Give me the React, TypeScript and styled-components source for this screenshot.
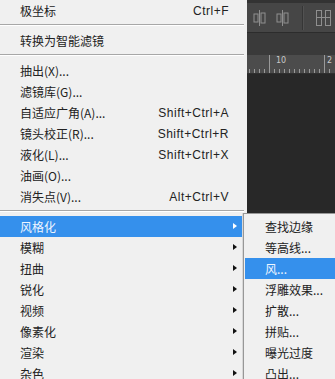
import React from "react";
import { createGlobalStyle, styled } from "styled-components";

type Entry =
  | { kind: "sep" }
  | { kind: "item"; label: string; shortcut?: string; sub?: boolean; active?: boolean };

const mainItems: Entry[] = [
  { kind: "item", label: "极坐标", shortcut: "Ctrl+F" },
  { kind: "sep" },
  { kind: "item", label: "转换为智能滤镜" },
  { kind: "sep" },
  { kind: "item", label: "抽出(X)..." },
  { kind: "item", label: "滤镜库(G)..." },
  { kind: "item", label: "自适应广角(A)...", shortcut: "Shift+Ctrl+A" },
  { kind: "item", label: "镜头校正(R)...", shortcut: "Shift+Ctrl+R" },
  { kind: "item", label: "液化(L)...", shortcut: "Shift+Ctrl+X" },
  { kind: "item", label: "油画(O)..." },
  { kind: "item", label: "消失点(V)...", shortcut: "Alt+Ctrl+V" },
  { kind: "sep" },
  { kind: "item", label: "风格化", sub: true, active: true },
  { kind: "item", label: "模糊", sub: true },
  { kind: "item", label: "扭曲", sub: true },
  { kind: "item", label: "锐化", sub: true },
  { kind: "item", label: "视频", sub: true },
  { kind: "item", label: "像素化", sub: true },
  { kind: "item", label: "渲染", sub: true },
  { kind: "item", label: "杂色", sub: true },
];

const stylizeItems = [
  { label: "查找边缘" },
  { label: "等高线..." },
  { label: "风...", active: true },
  { label: "浮雕效果..." },
  { label: "扩散..." },
  { label: "拼贴..." },
  { label: "曝光过度" },
  { label: "凸出..." },
];

const GlobalStyle = createGlobalStyle`
  html, body {
    margin: 0;
    padding: 0;
    background: #282828;
  }
  * {
    box-sizing: border-box;
  }
`;

export default function App() {
  return (
    <>
      <GlobalStyle />
      <Screen>
        <Menu>
          {mainItems.map((entry, i) =>
            entry.kind === "sep" ? (
              <Separator key={i} />
            ) : (
              <MenuItem key={i} $active={entry.active}>
                <Label>{entry.label}</Label>
                {entry.shortcut && <Shortcut>{entry.shortcut}</Shortcut>}
                {entry.sub && <Arrow $active={entry.active} />}
              </MenuItem>
            )
          )}
        </Menu>
        <Workspace>
          <OptionsBar>
            <AlignIcon />
            <AlignIcon />
            <BarDivider />
            <DistributeIcon />
          </OptionsBar>
          <TabStrip />
          <Ruler>
            <RulerTicks />
            <RulerNumber style={{ left: 29 }}>10</RulerNumber>
            <RulerNumber style={{ left: 80 }}>2</RulerNumber>
          </Ruler>
          <Canvas />
        </Workspace>
        <SubMenu>
          {stylizeItems.map((item, i) => (
            <SubItem key={i} $active={item.active}>
              {item.label}
            </SubItem>
          ))}
        </SubMenu>
      </Screen>
    </>
  );
}

const AlignIcon = () => (
  <svg width="13" height="16" viewBox="0 0 13 16">
    <rect x="6" y="0" width="1" height="16" fill="#8f8f8f" />
    <rect x="1" y="4" width="4" height="8" fill="none" stroke="#8f8f8f" />
    <rect x="8" y="3" width="4" height="10" fill="none" stroke="#8f8f8f" />
  </svg>
);

const DistributeIcon = () => (
  <svg width="17" height="18" viewBox="0 0 17 18">
    <rect x="1.5" y="1.5" width="5" height="15" fill="none" stroke="#8f8f8f" />
    <rect x="10.5" y="1.5" width="5" height="15" fill="none" stroke="#8f8f8f" />
    <rect x="1" y="8" width="15" height="1" fill="#8f8f8f" />
  </svg>
);

const RulerTicks = () => (
  <TickSvg width="87" height="18" viewBox="0 0 87 18">
    {Array.from({ length: 18 }).map((_, i) => {
      const x = 2 + i * 5;
      const major = x === 22 || x === 77;
      return (
        <rect
          key={i}
          x={x}
          y={major ? 0 : 14}
          width="1"
          height={major ? 18 : 4}
          fill="#9a9a9a"
        />
      );
    })}
  </TickSvg>
);

const Screen = styled.div`
  position: relative;
  display: flex;
  width: 335px;
  height: 379px;
  overflow: hidden;
  font-family: "Noto Sans CJK SC", "Liberation Sans", sans-serif;
  font-size: 12px;
`;

const Menu = styled.div`
  flex: 0 0 247px;
  display: flex;
  flex-direction: column;
  padding-right: 3px;
  background: #f0f0f0;
  color: #222222;
`;

const MenuItem = styled.div<{ $active?: boolean }>`
  position: relative;
  flex: 0 0 21px;
  display: flex;
  align-items: center;
  padding: 0 16px 0 20px;
  background: ${(p) => (p.$active ? "#3590ec" : "transparent")};
  color: ${(p) => (p.$active ? "#eef5ff" : "#222222")};
`;

const Label = styled.span`
  flex: 1;
  white-space: nowrap;
  line-height: 21px;
`;

const Shortcut = styled.span`
  font-family: "Liberation Sans", sans-serif;
  font-size: 12px;
  letter-spacing: 0.5px;
  white-space: nowrap;
  color: #222222;
  margin-right: -1px;
`;

const Arrow = styled.span<{ $active?: boolean }>`
  position: absolute;
  right: 7px;
  top: 7px;
  width: 0;
  height: 0;
  border-top: 3.5px solid transparent;
  border-bottom: 3.5px solid transparent;
  border-left: 4px solid ${(p) => (p.$active ? "#ffffff" : "#111111")};
`;

const Separator = styled.div`
  flex: 0 0 9px;
  display: flex;
  flex-direction: column;
  padding-top: 3px;

  &::before {
    content: "";
    height: 1px;
    background: #a7a7a7;
  }

  &::after {
    content: "";
    height: 1px;
    background: #ffffff;
  }
`;

const Workspace = styled.div`
  flex: 1;
  display: flex;
  flex-direction: column;
  background: #282828;
`;

const OptionsBar = styled.div`
  flex: 0 0 33px;
  display: flex;
  align-items: center;
  gap: 10px;
  padding: 0 0 0 6px;
  background: #464646;
  border-top: 3px solid #333333;
  border-bottom: 1px solid #2c2c2c;
`;

const BarDivider = styled.div`
  width: 1px;
  height: 24px;
  margin: 0 2px 0 3px;
  background: #363636;
  box-shadow: 1px 0 0 #525252;
`;

const TabStrip = styled.div`
  flex: 0 0 22px;
  background: #3a3a3a;
`;

const Ruler = styled.div`
  position: relative;
  flex: 0 0 18px;
  background: #4c4c4c;
  border-bottom: 1px solid #303030;
`;

const TickSvg = styled.svg`
  display: block;
`;

const RulerNumber = styled.span`
  position: absolute;
  top: 1px;
  font-family: "DejaVu Sans", sans-serif;
  font-size: 8px;
  color: #c8c8c8;
`;

const Canvas = styled.div`
  flex: 1;
  background: #282828;
`;

const SubMenu = styled.div`
  position: absolute;
  left: 243px;
  top: 213px;
  width: 110px;
  padding: 2px 0 2px 1px;
  background: #f0f0f0;
  border: 1px solid #979797;
  box-shadow: -1px 0 0 #d8d8d8;
`;

const SubItem = styled.div<{ $active?: boolean }>`
  height: 21px;
  line-height: 21px;
  padding-left: 20px;
  white-space: nowrap;
  background: ${(p) => (p.$active ? "#3590ec" : "transparent")};
  color: ${(p) => (p.$active ? "#eef5ff" : "#222222")};
`;
